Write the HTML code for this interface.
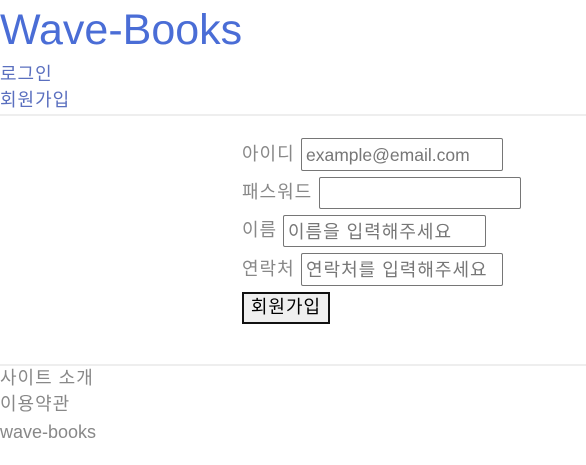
<!DOCTYPE html>
<html><head><meta charset="utf-8"><style>
body{margin:0;width:586px;height:465px;background:#fff;font-family:"Liberation Sans","Noto Sans CJK KR",sans-serif;position:relative;overflow:hidden}
.a{position:absolute;white-space:nowrap}
.k{letter-spacing:1px}
.t{left:0;top:3px;font-size:43px;color:#4a6dd6;line-height:54px}
.l{font-size:18px;color:#5a6fbf;left:0;line-height:22px}
.hr{position:absolute;left:0;width:586px;height:2px;background:#eee}
.lab{font-size:18px;color:#888;line-height:22px}
.in{position:absolute;box-sizing:border-box;border:1px solid #767676;border-radius:2px;height:33px;font-size:18px;color:#777;padding:6px 4px;line-height:20px;white-space:nowrap;overflow:hidden}
.btn{position:absolute;left:242px;top:292px;width:88px;height:32px;box-sizing:border-box;border:2px solid #111;background:#efefef;font-size:18px;text-align:center;line-height:27px;color:#000;letter-spacing:1px}
.f{font-size:18px;color:#888;left:0;line-height:22px}
</style></head><body>
<div class="a t">Wave-Books</div>
<div class="a l k" style="top:63px">로그인</div>
<div class="a l k" style="top:89px">회원가입</div>
<div class="hr" style="top:114px"></div>
<div class="a lab k" style="left:242px;top:143px">아이디</div>
<div class="in" style="left:301px;top:138px;width:202px;font-size:17.5px">example@email.com</div>
<div class="a lab k" style="left:242px;top:181px">패스워드</div>
<div class="in" style="left:319px;top:177px;width:202px;height:32px"></div>
<div class="a lab k" style="left:242px;top:219px">이름</div>
<div class="in k" style="left:283px;top:215px;width:203px;height:32px">이름을 입력해주세요</div>
<div class="a lab k" style="left:242px;top:258px">연락처</div>
<div class="in k" style="left:301px;top:253px;width:202px">연락처를 입력해주세요</div>
<div class="btn">회원가입</div>
<div class="hr" style="top:364px"></div>
<div class="a f k" style="top:367px">사이트 소개</div>
<div class="a f k" style="top:393px">이용약관</div>
<div class="a f" style="top:421px">wave-books</div>
</body></html>
